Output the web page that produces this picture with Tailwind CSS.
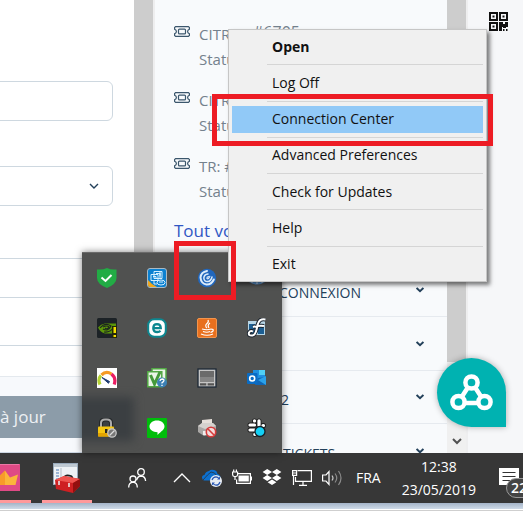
<!DOCTYPE html>
<html lang="fr">
<head>
<meta charset="utf-8">
<title>Bureau</title>
<script src="https://cdn.jsdelivr.net/npm/@tailwindcss/browser@4"></script>
</head>
<body class="font-['Open_Sans','Noto_Sans',sans-serif]">
<div class="relative flex h-screen flex-col overflow-hidden bg-white">

  <main class="flex min-h-0 flex-1 overflow-hidden">
    <!-- Form column -->
    <form class="flex w-[134px] shrink-0 flex-col overflow-hidden bg-white">
      <input aria-label="Champ 1" class="-ml-2 mt-[81px] h-10 w-[121px] shrink-0 rounded-md border border-[#ced8e0] bg-white">
      <div class="relative -ml-2 mt-[45px] h-10 w-[121px] shrink-0">
        <select aria-label="Liste" class="h-10 w-full appearance-none rounded-md border border-[#ced8e0] bg-white"><option></option></select>
        <svg class="pointer-events-none absolute right-3.5 top-4" width="10" height="8" viewBox="0 0 10 8" fill="none" stroke="#23405a" stroke-width="1.4"><path d="M1 2l4 4 4-4"/></svg>
      </div>
      <input aria-label="Champ 2" class="mt-[52px] h-10 w-full shrink-0 border-y border-[#ced8e0] bg-white">
      <div class="h-12 shrink-0 border-b border-[#ced8e0]"></div>
      <div class="h-[30px] shrink-0"></div>
      <div class="flex-1 border-t border-[#e4e9ee] bg-[#f7f9fc] pt-[19px]">
        <button type="button" class="h-[42px] w-full bg-[#8c9ca9] text-left text-[17px] text-[#eef1f4]">à jour</button>
        <div class="mt-3.5 border-t border-[#ccd6e2]"></div>
      </div>
    </form>
    <div class="w-[19px] shrink-0 bg-[#cdcdcd]"></div>
    <div class="w-0.5 shrink-0 bg-[#eeeeef]"></div>

    <!-- Tickets panel -->
    <section class="min-w-0 flex-1 overflow-hidden bg-[#f8fafc] text-[15px] text-[#74818d]">
      <ul class="flex flex-col gap-4 pl-[19px] pt-[22px] leading-[25px]">
        <li class="flex gap-[9px]">
          <svg class="mt-1 shrink-0" width="16" height="11" viewBox="0 0 16 11" fill="none" stroke="#3b566c" stroke-width="1.2"><path d="M1.6 .6h12.8l1 .9v1.7q-1.8.6-1.8 2.3t1.8 2.3v1.7l-1 .9H1.6l-1-.9V7.800q1.800-.6 1.800-2.300T.6 3.200V1.500z"/><rect x="4.500" y="3.100" width="7" height="4.800" rx="1"/></svg>
          <div><p class="flex items-start gap-2.5"><span>CITRIX</span><span class="text-base leading-5">#6705</span></p><p>Statut</p></div>
        </li>
        <li class="flex gap-[9px]">
          <svg class="mt-1 shrink-0" width="16" height="11" viewBox="0 0 16 11" fill="none" stroke="#3b566c" stroke-width="1.2"><path d="M1.6 .6h12.8l1 .9v1.7q-1.8.6-1.8 2.3t1.8 2.3v1.7l-1 .9H1.6l-1-.9V7.800q1.800-.6 1.800-2.300T.6 3.200V1.500z"/><rect x="4.500" y="3.100" width="7" height="4.800" rx="1"/></svg>
          <div><p>CITR</p><p>Statut</p></div>
        </li>
        <li class="flex gap-[9px]">
          <svg class="mt-1 shrink-0" width="16" height="11" viewBox="0 0 16 11" fill="none" stroke="#3b566c" stroke-width="1.2"><path d="M1.6 .6h12.8l1 .9v1.7q-1.8.6-1.8 2.3t1.8 2.3v1.7l-1 .9H1.6l-1-.9V7.800q1.800-.6 1.800-2.300T.6 3.200V1.500z"/><rect x="4.500" y="3.100" width="7" height="4.800" rx="1"/></svg>
          <div><p>TR: #</p><p>Statut</p></div>
        </li>
      </ul>
      <a href="#" class="mt-[15px] block pl-[19px] text-[17px] leading-6 text-[#3157c4]">Tout voir</a>
      <div class="mt-5 text-sm text-[#23405a]">
        <div class="flex h-[54px] items-center justify-between border-b border-[#e6eaef] pl-[124px] pr-[23px]"><span class="pt-1.5">CONNEXION</span><svg width="8" height="6" viewBox="0 0 8 6" fill="none" stroke="#23405a" stroke-width="1.900"><path d="M.6 1L4 4.300 7.400 1"/></svg></div>
        <div class="flex h-[54px] items-center justify-end border-b border-[#e6eaef] pr-[23px]"><svg width="8" height="6" viewBox="0 0 8 6" fill="none" stroke="#23405a" stroke-width="1.900"><path d="M.6 1L4 4.300 7.400 1"/></svg></div>
        <div class="flex h-[53px] items-center justify-between border-b border-[#e6eaef] pl-[126px] pr-[23px]"><span class="pt-1.5">2</span><svg width="8" height="6" viewBox="0 0 8 6" fill="none" stroke="#23405a" stroke-width="1.900"><path d="M.6 1L4 4.300 7.400 1"/></svg></div>
        <div class="flex h-[53px] items-center justify-between pl-[128px] pr-[23px]"><span class="pt-1.5">TICKETS</span><svg width="8" height="6" viewBox="0 0 8 6" fill="none" stroke="#23405a" stroke-width="1.900"><path d="M.6 1L4 4.300 7.400 1"/></svg></div>
      </div>
    </section>

    <!-- Scrollbar -->
    <div class="flex w-[19px] shrink-0 flex-col items-center bg-[#f0f0f0]">
      <div class="h-4/5 w-full bg-[#cdcdcd]"></div>
      <svg class="mb-2 mt-auto" width="10" height="7" viewBox="0 0 10 7" fill="none" stroke="#505050" stroke-width="2"><path d="M1 1l4 4 4-4"/></svg>
    </div>
    <aside class="w-[57px] shrink-0 border-l-2 border-[#eeeeef] bg-[#f6f7f9] pl-[21px] pt-3">
      <svg width="19" height="19" viewBox="0 0 19 19" fill="#111"><path fill-rule="evenodd" d="M0 0h9v9H0zM2 2v5h5V2zM10 0h9v9h-9zM12 2v5h5V2zM0 10h9v9H0zM2 12v5h5v-5z"/><path d="M3.500 3.500h2v2h-2zM13.500 3.500h2v2h-2zM3.500 13.500h2v2h-2zM10 10h4v2h2v-2h3v5h-2v1h-3v-1h-1v4h-3zM14 17h1.500v2h-1.500zM17 17h1.500v2H17z"/></svg>
    </aside>
  </main>

  <!-- Taskbar -->
  <footer class="flex h-[50px] shrink-0 items-center bg-[#373737] text-white">
    <button aria-label="Couronne" class="flex h-full w-[31px] shrink-0 flex-col border-b-[3px] border-[#ff999b] pt-[11px]">
      <svg width="20" height="27" viewBox="0 0 20 27"><rect width="20" height="27" fill="#df4a85"/><rect width="19" height="1" fill="#ea78a4"/><path d="M-3 21L-4 10l4 3 5-6.500 5 7 8-3-2.500 10.500z" fill="#fbb63a"/><path d="M5 6.500v14.500H-3V14z" fill="#f89b2a"/></svg>
    </button>
    <button aria-label="Boîte à outils" class="ml-[11px] flex h-full w-[50px] shrink-0 flex-col items-center border-b-[3px] border-[#ff999b] pt-[10px]">
      <svg width="28" height="30" viewBox="0 0 28 30"><rect x=".5" y=".5" width="24" height="21" fill="#eef2f5" stroke="#9ab"/><path d="M1 1h23v3H1z" fill="#bfc9d2"/><path d="M3 7h3M3 10h3M3 13h3M3 16h3" stroke="#4a78b5" stroke-width="1.200"/><path d="M8 5v12" stroke="#b5bec6"/><path d="M11 15q1-4 7-2 2 1 1 4" fill="none" stroke="#222" stroke-width="1.700"/><path d="M2 17l9-4 16 3v7l-7 7-17-4z" fill="#ce2022"/><path d="M2 17l9-4 16 3-7 4z" fill="#ef5550"/><path d="M20 20l7-4v7l-7 7z" fill="#94100f"/><path d="M6 18v4M16 20v4" stroke="#eee" stroke-width="1.500"/></svg>
    </button>
    <svg class="ml-9 shrink-0" width="19" height="20" viewBox="0 0 19 20" fill="none" stroke="#fff" stroke-width="1.300"><circle cx="13" cy="4" r="3.300"/><circle cx="5" cy="11" r="3"/><path d="M.7 19.500q0-5 4.300-5.300 4.300.3 4.300 5.300M8.600 12.200q1-4 4.400-4.200 4.300.3 4.600 5"/></svg>
    <div class="ml-[25px] flex shrink-0 items-center gap-2.5">
      <svg width="20" height="20" viewBox="0 0 20 20" fill="none" stroke="#fff" stroke-width="1.300"><path d="M2 14l8-8 8 8"/></svg>
      <svg width="20" height="20" viewBox="0 0 20 20"><path d="M4 12.500H2.500Q0 12 0 9.500 0 7 2.500 7 3.500 3.500 7 3q2-2 5-1 3 .6 3.500 4 3 .4 3 4v2.500z" fill="#0c70d0"/><path d="M1 12q5-6 8-8 4 0 6 4" fill="none" stroke="#2b2b2b" stroke-width=".7"/><circle cx="14" cy="13" r="6" fill="#e8edf4"/><path d="M10 12q1-3.200 4-3.200 1.800.2 3 1.700M18 14q-1 3.200-4 3.200-1.800-.2-3-1.700" fill="none" stroke="#2b59b5" stroke-width="1.200"/><path d="M18 8.500V11.500H15zM10 17.500V14.500H13z" fill="#2b59b5"/></svg>
      <svg width="20" height="20" viewBox="0 0 20 20" fill="none" stroke="#fff" stroke-width="1.200"><path d="M6 5.600h12.400v9.800H4.600v-4M19.500 8.500v4"/><path d="M6.500 7.500h10.300v6H6.500z" fill="#fff" stroke="none"/><path d="M.6 4h5v2.500q0 1.700-1.600 2H2.200Q.6 8.200.6 6.500zM1.700 4V1.500M4.400 4V1.500M3 8.500v3.500" fill="#373737"/></svg>
      <svg width="20" height="20" viewBox="0 0 20 20" fill="#fff"><path d="M5.200 1l4.800 3-4.800 3L.6 4zM14.800 1l4.600 3-4.600 3L10 4zM5.200 7L10 10l-4.800 3L.6 10zM14.800 7l4.600 3-4.600 3L10 10zM5.600 14.200L10 11.500l4.400 2.700L10 17z"/></svg>
      <svg width="20" height="20" viewBox="0 0 20 20" fill="none" stroke="#fff" stroke-width="1.200"><path d="M5.500 2.600h13.900v10.800H3.500V9M11 13.500v3.500M7 17.400h8"/><path d="M.6 2.600h4v4.800h-4zM1.500 7.400v9.500M0 5h5"/></svg>
      <svg width="21" height="20" viewBox="0 0 21 20" fill="none" stroke="#fff" stroke-width="1.200"><path d="M.6 7H4l3-3.500v13L4 13H.6z"/><path d="M10 7.500q2 2.500 0 5" stroke="#c5c5c5"/><path d="M13 5.500q3.500 4.500 0 9M16.500 3q5 7 0 14" stroke="#8b8b8b"/></svg>
    </div>
    <span class="ml-[13px] shrink-0 text-sm">FRA</span>
    <div class="ml-auto shrink-0 text-center text-sm leading-[23px]">12:38<br>23/05/2019</div>
    <div class="relative ml-[23px] mr-1 h-5 w-5 shrink-0">
      <svg width="20" height="20" viewBox="0 0 20 20"><path d="M0 0h20v17h-8l-3 3v-3H0z" fill="#fff"/><path d="M3.500 4.500h13M3.500 8.500h13M3.500 12.500h9" stroke="#333" stroke-width="1.200"/></svg>
      <span class="absolute left-[7px] top-[10px] flex h-5 w-8 items-center rounded-full border border-[#999] bg-[#444] pl-1 text-sm font-semibold">22</span>
    </div>
  </footer>
  <div class="flex h-2 shrink-0 flex-col"><div class="h-1.5 bg-linear-to-b from-[#a4b4c8] to-[#cfdbe8]"></div><div class="h-px bg-white"></div><div class="h-px bg-[#cfcfcf]"></div></div>

  <!-- Chat launcher -->
  <button aria-label="Assistance" class="absolute bottom-[84px] right-[17px] flex h-[69px] w-[69px] items-center justify-center rounded-full rounded-br-lg bg-[#00b2b1] shadow-[0_0_6px_rgba(0,0,0,.3)]">
    <svg width="43" height="38" viewBox="0 0 43 38" fill="none" stroke="#fff" stroke-width="4.500"><circle cx="21.500" cy="8.500" r="6.100"/><circle cx="8.500" cy="28" r="6.100"/><circle cx="34.500" cy="28" r="6.100"/><path d="M17.500 14l-5.500 8.500M25.500 14l5.500 8.500M15 29h13"/></svg>
  </button>

  <!-- Notification area overflow -->
  <div class="absolute bottom-[58px] left-[82px] isolate grid h-[201px] w-[200px] grid-cols-4 grid-rows-4 place-items-center overflow-hidden border-t border-[#6a6a6a] bg-[#505150] shadow-[0_0_7px_rgba(0,0,0,.5)]">
    <div class="absolute -left-3 bottom-3 -z-10 h-11 w-16 bg-[#3b3f42] blur-[5px]"></div>
    <svg width="20" height="20" viewBox="0 0 20 20"><path d="M0 1.500Q6 2 10 0q4 2 9.500 1.500V10q0 6-9.500 10Q0 16 0 10z" fill="#22ac45"/><path d="M4.500 9.500l4 3.500 6-6" fill="none" stroke="#fff" stroke-width="2"/></svg>
    <svg width="20" height="20" viewBox="0 0 20 20"><rect x=".5" y=".5" width="19" height="19" rx="2.500" fill="#0b80d0" stroke="#aab9c3"/><path d="M1 12q4 5 9 7H3q-2 0-2-2z" fill="#f2a71c"/><g fill="none" stroke="#d5efff"><path d="M7 3.500h8v7H7zM4 6.500h7v6H4zM9 5.500h4v3M6 8.500h3v2M12 6h2M13 4v6"/><ellipse cx="14" cy="14.500" rx="4" ry="2.500"/><path d="M12 14h4M7 13v3h3"/></g></svg>
    <svg width="20" height="20" viewBox="0 0 20 20"><circle cx="10" cy="10" r="9.200" fill="#2167bd"/><g fill="none" stroke="#dcecfb" stroke-linecap="round"><path d="M10 3Q4 4 3.500 9.500 4 15.500 9.500 16.500q5 .2 7.300-5" stroke-width="2"/><path d="M11 6Q7.200 6.300 6.800 10q.3 3.500 3.700 3.600 3.500-.4 4.500-4.600" stroke-width="1.500"/><path d="M11.500 8.700q-1.700.2-1.600 1.700 1.600 1.400 2.900-2" stroke-width="1.200"/></g></svg>
    <svg width="20" height="20" viewBox="0 0 20 20"><path d="M2 8q8-6 16 0v6q-8 5-16 0z" fill="#5d96d2"/><path d="M2 12h16M5 15v-2M10 16v-3M15 15v-2" stroke="#dbe8f4"/></svg>

    <svg width="20" height="20" viewBox="0 0 20 20"><rect width="20" height="20" rx="1.500" fill="#1c2226"/><path d="M1 9.500Q4 6 8 5.500h11v10H8Q3.500 14.500 1 9.500z" fill="#5c9708"/><path d="M3 10q5-6 11-2-3 6-8 3M6 9q4-2 6 0-2 3-4 1M7 14q6 1 10-5" fill="none" stroke="#1c2520" stroke-width="1.100"/><rect x="15" y="8" width="5" height="12" fill="#23280a"/><path d="M16.500 9h2.500v6h-2.500zM16.500 17h2.500v2h-2.500z" fill="#f4de00"/></svg>
    <svg width="20" height="20" viewBox="0 0 20 20"><rect x="1.200" y="1.200" width="17.600" height="17.600" rx="6" fill="#fff" stroke="#0d8790" stroke-width="2"/><path d="M6 10.200h7.800q-.2-4-3.800-4Q6.300 6.300 6.300 10.200q0 3.800 4 3.800 2 0 3.200-1.200" fill="none" stroke="#0d8790" stroke-width="2.300"/></svg>
    <svg width="20" height="20" viewBox="0 0 20 20"><rect x=".5" y=".5" width="19" height="19" rx="1.500" fill="#e8701e" stroke="#f2954d"/><g fill="none" stroke="#fff" stroke-width="1.200"><path d="M11 2q1 2-1 3.500-2.500 2 0 4.500M13 5q-3 2-1 5M5 11q5 1.500 9 0M6 13.500q4 1.500 7 0M14 11q3 0 2 2-1 1-2.500 1.500M4 16q6 2.500 12 0"/></g></svg>
    <svg width="20" height="20" viewBox="0 0 20 20"><path d="M1 3h17v14H1z" fill="#b7d6e7"/><path d="M2 6h6v10H2zM11 9h6v7h-6z" fill="#1d5f93"/><path d="M18.500 1.500Q12 0 10.500 7 9 17 5.500 17.500 1 18 2 14.500q1.500-2.500 4-1M6 9q7-2 11-1" fill="none" stroke="#1c2530" stroke-width="4"/><path d="M18.500 1.500Q12 0 10.500 7 9 17 5.500 17.500 1 18 2 14.500q1.500-2.500 4-1M6 9q7-2 11-1" fill="none" stroke="#fff" stroke-width="2"/></svg>

    <svg width="20" height="20" viewBox="0 0 20 20"><rect width="20" height="20" fill="#fff"/><g fill="none" stroke-width="3.200"><path d="M3 16.500Q.5 11 4 7.500" stroke="#b5d334"/><path d="M4.500 7q4.500-4.500 10-1" stroke="#f59a22"/><path d="M14.500 6q5 4 2.700 10.500" stroke="#ea1d62"/></g><path d="M5 9.500l7.500 4-1 1.800z" fill="#1e3c72" stroke="#1e3c72"/></svg>
    <svg width="20" height="20" viewBox="0 0 20 20"><path d="M5 .8h14v13H5z" fill="#e9f5e7" stroke="#52a844" stroke-width="1.500"/><path d="M.8 3.800h14v15h-14z" fill="#e9f5e7" stroke="#52a844" stroke-width="1.500"/><path d="M3.500 7l4 9L13 4" fill="none" stroke="#44993a" stroke-width="3"/><circle cx="15" cy="14.500" r="5" fill="#3c80b5"/><path d="M13 13q.3-2 2.200-2 2 .2 1.700 1.800-.4 1-1.900 1.900v.8M15 16.700v1.300" fill="none" stroke="#fff" stroke-width="1.300"/></svg>
    <svg width="20" height="20" viewBox="0 0 20 20"><rect x="1" y="1" width="18" height="18" fill="#c6c6c6" stroke="#1d2836" stroke-width="1.300"/><rect x="3" y="3" width="14" height="11" fill="#6b6b6b"/><path d="M3 9h14v5H3z" fill="#858585"/><path d="M3 15.300h6.300v2.200H3zM10.600 15.300H17v2.200h-6.400z" fill="#555"/></svg>
    <svg width="20" height="20" viewBox="0 0 20 20"><path d="M6 2h12v14H6z" fill="#1f8fe0"/><path d="M12 2h6v5h-6z" fill="#50d0f5"/><path d="M11 10l8-1v8H8z" fill="#1066b5"/><path d="M19 8v9l-8-5z" fill="#2ba2ea"/><rect y="5" width="10.500" height="11" rx="1" fill="#0a6cc4"/><circle cx="5.200" cy="10.500" r="2.500" fill="none" stroke="#fff" stroke-width="1.600"/></svg>

    <svg width="20" height="20" viewBox="0 0 20 20"><path d="M4 10V5q0-3.500 4-3.500h2q4 0 4 3.500v5" fill="none" stroke="#25282a" stroke-width="4"/><path d="M4 10V5q0-3.500 4-3.500h2q4 0 4 3.500v5" fill="none" stroke="#aaa" stroke-width="2"/><rect x="1" y="8.500" width="16" height="10" rx="1" fill="#f6c612"/><path d="M1 15h16v3.500H1z" fill="#e2a300"/><path d="M8 11h2.500v4H8z" fill="#222"/><circle cx="15" cy="15" r="4.200" fill="#777" stroke="#c6c6c6" stroke-width="1.300"/><path d="M12.500 17.500l5-5" stroke="#ddd" stroke-width="1.300"/></svg>
    <svg width="20" height="20" viewBox="0 0 20 20"><rect width="20" height="20" rx="1" fill="#00bd0b"/><path d="M10 2.500c4.500 0 7.500 2.700 7.500 6 0 3-3 4.500-7 8.500v-2.800C6 14 2.500 12 2.500 8.500c0-3.300 3-6 7.500-6z" fill="#fff"/></svg>
    <svg width="20" height="20" viewBox="0 0 20 20"><path d="M5 2l10-1v7H5z" fill="#e6e0da"/><path d="M1 8l4-3h11l3 3v7l-12 3-6-4z" fill="#aaa8a6"/><path d="M1 8l4-3h11l3 3-11 3z" fill="#d5d2ce"/><path d="M6 13h7v4H6z" fill="#eee"/><circle cx="14" cy="14" r="4.700" fill="#f3dcdc" stroke="#d63b3b" stroke-width="1.600"/><path d="M11 11l6 6" stroke="#d63b3b" stroke-width="1.600"/></svg>
    <svg width="20" height="20" viewBox="0 0 20 20"><g stroke="#1e1e1e" stroke-width="5" stroke-linecap="round"><path d="M3 7h4.500M7.500 3v1M12 3v4.500M16 7.500h.5M3 12h5M8 16v.500M12 11.500V16"/></g><g stroke="#fff" stroke-width="3.200" stroke-linecap="round"><path d="M3 7h4.500M7.500 2.800v.2M12 2.800v4.700M16 7.500h.500M3 12h4.800M7.800 16.300v.2M12 12v4"/></g><circle cx="13" cy="13.500" r="5" fill="#14d0f5" stroke="#162027" stroke-width="1.300"/></svg>
  </div>

  <!-- Context menu -->
  <div role="menu" class="absolute left-[228px] top-[29px] flex h-[253px] w-[259px] flex-col border border-[#c6c6c6] bg-[#f0f0f0] p-[3px] text-sm text-[#111] shadow-[3px_3px_4px_rgba(0,0,0,.5)]">
    <button role="menuitem" class="flex-1 pl-10 text-left font-bold">Open</button>
    <div class="my-1 ml-[35px] h-px bg-[#d5d5d5]"></div>
    <button role="menuitem" class="flex-1 pl-10 text-left">Log Off</button>
    <div class="my-1 ml-[35px] h-px bg-[#d5d5d5]"></div>
    <button role="menuitem" class="flex-1 bg-[#91c9f7] pl-10 text-left">Connection Center</button>
    <div class="my-1 ml-[35px] h-px bg-[#d5d5d5]"></div>
    <button role="menuitem" class="flex-1 pl-10 text-left">Advanced Preferences</button>
    <div class="my-1 ml-[35px] h-px bg-[#d5d5d5]"></div>
    <button role="menuitem" class="flex-1 pl-10 text-left">Check for Updates</button>
    <div class="my-1 ml-[35px] h-px bg-[#d5d5d5]"></div>
    <button role="menuitem" class="flex-1 pl-10 text-left">Help</button>
    <div class="my-1 ml-[35px] h-px bg-[#d5d5d5]"></div>
    <button role="menuitem" class="flex-1 pl-10 text-left">Exit</button>
  </div>

  <!-- Highlight frames -->
  <div class="pointer-events-none absolute left-[212px] top-[94px] h-[52px] w-[281px] border-5 border-[#ed1c24]"></div>
  <div class="pointer-events-none absolute left-[174px] top-[241px] h-[59px] w-[62px] border-5 border-[#ed1c24]"></div>
</div>
</body>
</html>
